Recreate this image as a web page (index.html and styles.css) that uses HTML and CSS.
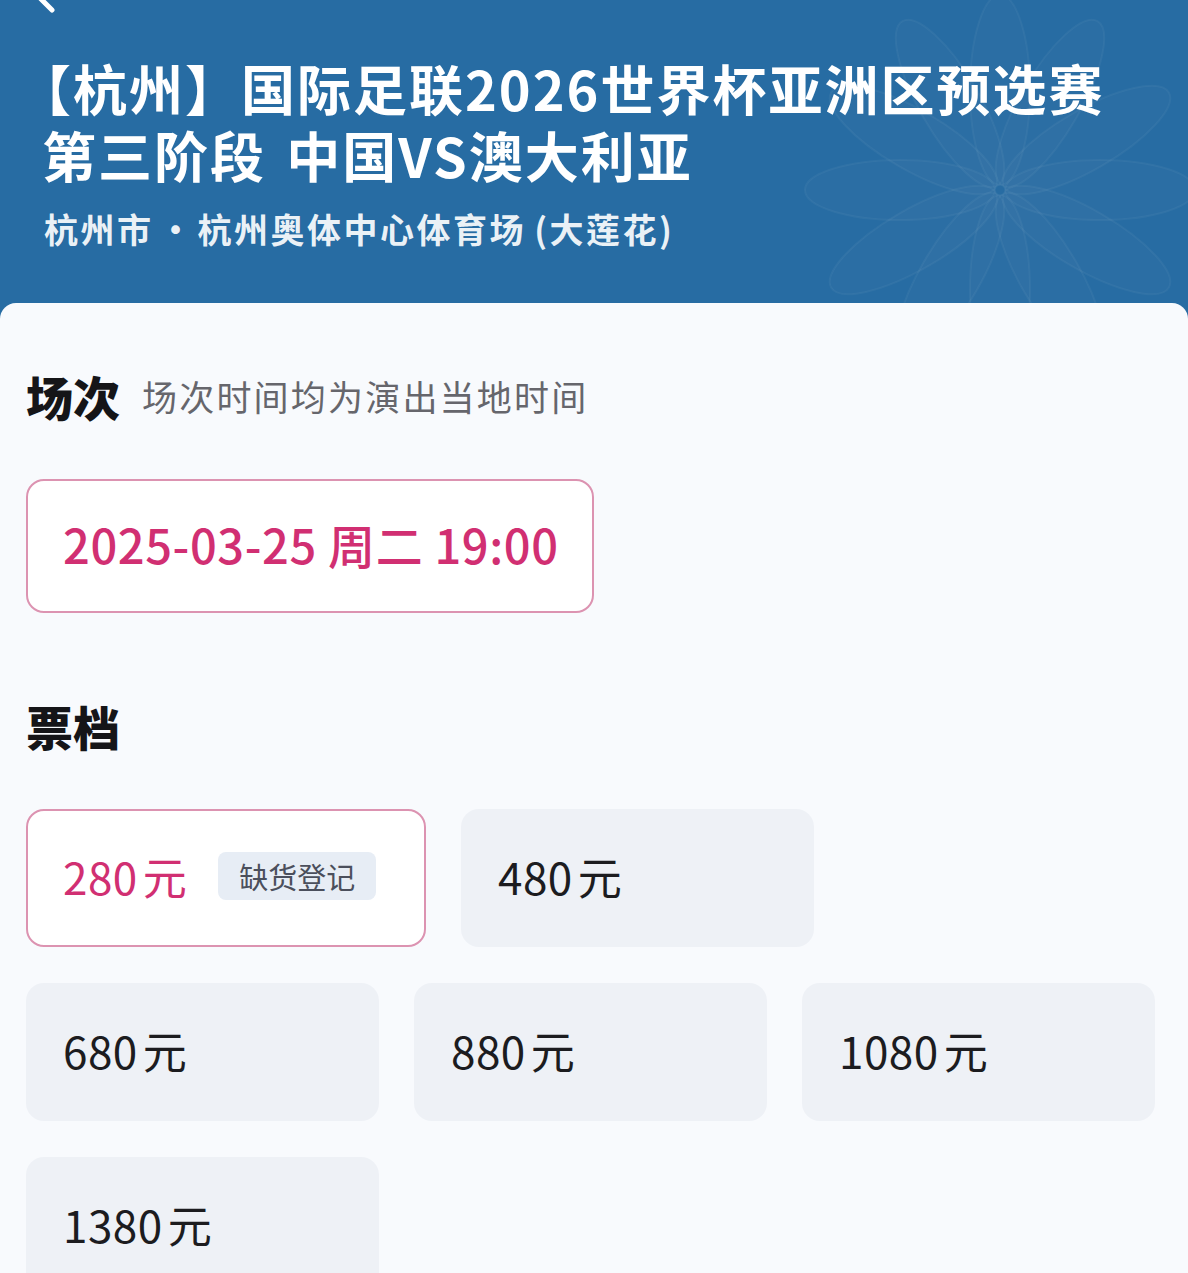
FILE: index.html
```html
<!DOCTYPE html>
<html lang="zh-CN">
<head>
    <meta charset="UTF-8">
    <meta name="viewport" content="width=device-width, initial-scale=1.0">
    <title>中国VS澳大利亚 - 选座购票</title>
    <link rel="stylesheet" href="styles.css">
</head>
<body>
    <!-- Event header -->
    <header class="hero">
        <svg class="back-icon" width="40" height="40" viewBox="0 0 40 40">
            <path d="M26 4 L10 20 L26 36" fill="none" stroke="#fff" stroke-width="5" stroke-linecap="round" stroke-linejoin="round"/>
        </svg>

        <svg class="lotus" width="460" height="320" viewBox="0 0 460 320">
            <g transform="translate(230 190)" stroke="#ffffff" stroke-opacity="0.045" stroke-width="2" fill="#ffffff" fill-opacity="0.02">
                <ellipse cx="0" cy="-100" rx="30" ry="95" transform="rotate(0)"/>
                <ellipse cx="0" cy="-100" rx="30" ry="95" transform="rotate(30)"/>
                <ellipse cx="0" cy="-100" rx="30" ry="95" transform="rotate(60)"/>
                <ellipse cx="0" cy="-100" rx="30" ry="95" transform="rotate(90)"/>
                <ellipse cx="0" cy="-100" rx="30" ry="95" transform="rotate(120)"/>
                <ellipse cx="0" cy="-100" rx="30" ry="95" transform="rotate(150)"/>
                <ellipse cx="0" cy="-100" rx="30" ry="95" transform="rotate(180)"/>
                <ellipse cx="0" cy="-100" rx="30" ry="95" transform="rotate(210)"/>
                <ellipse cx="0" cy="-100" rx="30" ry="95" transform="rotate(240)"/>
                <ellipse cx="0" cy="-100" rx="30" ry="95" transform="rotate(270)"/>
                <ellipse cx="0" cy="-100" rx="30" ry="95" transform="rotate(300)"/>
                <ellipse cx="0" cy="-100" rx="30" ry="95" transform="rotate(330)"/>
            </g>
        </svg>

        <h1 class="event-title">
            <span class="title-line first">【杭州】国际足联2026世界杯亚洲区预选赛</span>
            <span class="title-line">第三阶段 中国VS澳大利亚</span>
        </h1>
        <p class="venue">杭州市<span class="dot">·</span>杭州奥体中心体育场 (大莲花)</p>
    </header>

    <main class="panel">
        <!-- Sessions -->
        <h2 class="section-title">场次 <span class="hint">场次时间均为演出当地时间</span></h2>
        <div class="session-list">
            <div class="option session selected">2025-03-25 周二 19:00</div>
        </div>

        <!-- Price tiers -->
        <h2 class="section-title tiers-title">票档</h2>
        <div class="ticket-grid">
            <div class="option ticket selected">280<span class="unit">元</span> <span class="badge">缺货登记</span></div>
            <div class="option ticket">480<span class="unit">元</span></div>
            <div class="option ticket">680<span class="unit">元</span></div>
            <div class="option ticket">880<span class="unit">元</span></div>
            <div class="option ticket">1080<span class="unit">元</span></div>
            <div class="option ticket">1380<span class="unit">元</span></div>
        </div>
    </main>
</body>
</html>
```

FILE: styles.css
```css
body {
    margin: 0;
    font-family: "Noto Sans CJK SC", "Noto Sans", sans-serif;
    background-color: #f8fafd;
    color: #1c1c1f;
    overflow: hidden;
}

/* Header */
.hero {
    position: relative;
    background-color: #276ca3;
    color: #fff;
    padding: 54px 42px 72px;
    overflow: hidden;
}
.back-icon {
    position: absolute;
    left: 26px;
    top: -26px;
}
.lotus {
    position: absolute;
    right: -42px;
    top: 0;
}
.event-title {
    position: relative;
    margin: 0;
    font-size: 54px;
    font-weight: 700;
    letter-spacing: 2px;
    white-space: nowrap;
    word-spacing: 6px;
}
.title-line {
    display: block;
    height: 67px;
    line-height: 67px;
}
.title-line.first {
    margin-left: -25px;
}
.venue {
    position: relative;
    margin: 19px 0 0 2px;
    font-size: 34px;
    line-height: 44px;
    font-weight: 700;
    color: rgba(255, 255, 255, 0.92);
    letter-spacing: 2.5px;
    word-spacing: -2px;
}
.venue .dot {
    display: inline-block;
    width: 44px;
    text-align: center;
    letter-spacing: 0;
}

/* White panel */
.panel {
    position: relative;
    margin-top: -20px;
    background-color: #f8fafd;
    border-radius: 16px 16px 0 0;
    padding: 63px 32px 40px 26px;
}
.section-title {
    margin: 0;
    font-size: 47px;
    line-height: 60px;
    font-weight: 900;
    color: #151518;
    display: flex;
    align-items: center;
    gap: 22px;
}
.hint {
    font-size: 35px;
    font-weight: 400;
    color: #66666c;
    letter-spacing: 2.2px;
}
.tiers-title {
    margin-top: 83px;
}

.session-list {
    margin-top: 53px;
    display: flex;
}
.option {
    box-sizing: border-box;
    display: flex;
    align-items: center;
    border-radius: 18px;
    background-color: #eef1f6;
    border: 2px solid transparent;
    padding: 0 35px;
    font-size: 44px;
    color: #1c1c1f;
    white-space: nowrap;
}
.option.selected {
    background-color: #fff;
    border-color: #dc93b1;
    color: #d12f72;
}
.session {
    width: 568px;
    height: 134px;
    padding-bottom: 6px;
    font-size: 47px;
    font-weight: 500;
    letter-spacing: 0.6px;
}

.ticket-grid {
    margin-top: 53px;
    display: flex;
    flex-wrap: wrap;
    column-gap: 35px;
    row-gap: 36px;
}
.ticket {
    width: 353px;
    height: 138px;
    padding-bottom: 4px;
    letter-spacing: 0.5px;
}
.ticket.selected {
    width: 400px;
}
.unit {
    margin-left: 5px;
}
.badge {
    margin-left: 31px;
    padding: 0 21px;
    height: 48px;
    line-height: 48px;
    border-radius: 8px;
    background-color: #e7edf5;
    color: #4b4f5c;
    font-size: 29px;
    letter-spacing: 0;
}
```
